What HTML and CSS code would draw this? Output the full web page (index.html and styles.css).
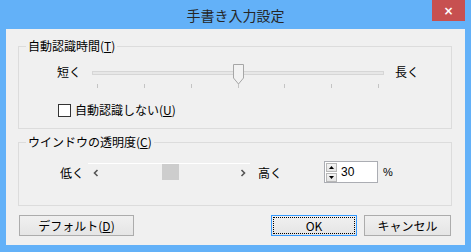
FILE: index.html
```html
<!DOCTYPE html>
<html lang="ja">
<head>
    <meta charset="UTF-8">
    <title>手書き入力設定</title>
    <link rel="stylesheet" href="styles.css">
</head>
<body>
    <div class="window">
        <div class="titlebar">
            <span class="title">手書き入力設定</span>
            <button class="close-btn">×</button>
        </div>

        <div class="client">
            <fieldset class="group group-time">
                <legend>自動認識時間(<u>T</u>)</legend>
                <div class="slider-row">
                    <span class="edge-label">短く</span>
                    <div class="slider">
                        <div class="track"></div>
                        <svg class="thumb" width="11" height="21" viewBox="0 0 11 21">
                            <polygon points="0.5,0.5 10.5,0.5 10.5,14 5.5,20 0.5,14" fill="#f2f2f2" stroke="#a6a6a6"/>
                        </svg>
                        <div class="ticks">
                            <i></i><i></i><i></i><i></i><i></i><i></i><i></i>
                        </div>
                    </div>
                    <span class="edge-label">長く</span>
                </div>
                <label class="check-row">
                    <span class="checkbox"></span>
                    <span>自動認識しない(<u>U</u>)</span>
                </label>
            </fieldset>

            <fieldset class="group group-alpha">
                <legend>ウインドウの透明度(<u>C</u>)</legend>
                <div class="alpha-row">
                    <span class="low-label">低く</span>
                    <div class="scrollbar">
                        <svg width="6" height="8" viewBox="0 0 6 8"><polyline points="4.5,1 1.5,4 4.5,7" fill="none" stroke="#555" stroke-width="1.6"/></svg>
                        <div class="scroll-track"><div class="scroll-thumb"></div></div>
                        <svg width="6" height="8" viewBox="0 0 6 8"><polyline points="1.5,1 4.5,4 1.5,7" fill="none" stroke="#555" stroke-width="1.6"/></svg>
                    </div>
                    <span class="high-label">高く</span>
                    <div class="spin">
                        <div class="spin-btns">
                            <div class="spin-btn"><svg width="5" height="3" viewBox="0 0 5 3"><polygon points="2.5,0 5,3 0,3" fill="#000"/></svg></div>
                            <div class="spin-btn"><svg width="5" height="3" viewBox="0 0 5 3"><polygon points="0,0 5,0 2.5,3" fill="#000"/></svg></div>
                        </div>
                        <span class="spin-value">30</span>
                    </div>
                    <span class="percent">%</span>
                </div>
            </fieldset>

            <div class="buttons">
                <button class="btn btn-default">デフォルト(<u>D</u>)</button>
                <div class="btn-group">
                    <button class="btn btn-ok"><span>OK</span></button>
                    <button class="btn">キャンセル</button>
                </div>
            </div>
        </div>
    </div>
</body>
</html>
```

FILE: styles.css
```css
* {
    margin: 0;
    padding: 0;
    box-sizing: border-box;
}

body {
    font-family: "Noto Sans CJK JP", "Noto Sans", sans-serif;
    font-size: 12px;
    color: #000;
    background: #63b1f8;
}

.window {
    width: 471px;
    height: 252px;
    background: #63b1f8;
    display: flex;
    flex-direction: column;
}

.titlebar {
    height: 29px;
    padding: 0 6px;
    display: grid;
    grid-template-columns: 1fr auto 1fr;
}

.title {
    grid-column: 2;
    font-size: 14px;
    line-height: 30px;
    color: #262626;
}

.close-btn {
    grid-column: 3;
    justify-self: end;
    align-self: start;
    width: 33px;
    height: 21px;
    border: none;
    background: #c75050;
    color: #fff;
    font-family: "DejaVu Sans", sans-serif;
    font-size: 12px;
    font-weight: bold;
    line-height: 20px;
}

.client {
    margin: 0 6px;
    height: 216px;
    background: #f0f0f0;
    padding: 9px 13px 0 12px;
}

.group {
    border: 1px solid #dcdcdc;
    padding: 0;
    min-width: 0;
}

.group legend {
    margin-left: 7px;
    padding: 0 2px;
    line-height: 16px;
}

.group-time {
    padding: 8px 0 10px 0;
}

.slider-row {
    display: flex;
    align-items: flex-start;
    height: 28px;
    margin-left: 38px;
}

.edge-label {
    margin-top: 2px;
    line-height: 16px;
}

.slider {
    position: relative;
    width: 292px;
    height: 28px;
    margin: 0 11px;
}

.track {
    position: absolute;
    left: 0;
    right: 0;
    top: 9px;
    height: 4px;
    background: #e7e7e7;
    border: 1px solid #d6d6d6;
}

.thumb {
    position: absolute;
    left: 141px;
    top: 2px;
}

.ticks {
    position: absolute;
    left: 5px;
    right: 5px;
    top: 22px;
    display: flex;
    justify-content: space-between;
}

.ticks i {
    width: 1px;
    height: 4px;
    background: #c4c4c4;
}

.check-row {
    display: flex;
    align-items: center;
    gap: 4px;
    margin-top: 12px;
    margin-left: 39px;
    line-height: 16px;
}

.checkbox {
    width: 13px;
    height: 13px;
    border: 1px solid #333;
    background: #fff;
}

.group-alpha {
    margin-top: 5px;
    padding: 11px 0 22px 0;
}

.alpha-row {
    display: flex;
    align-items: center;
    height: 22px;
    margin-left: 41px;
}

.scrollbar {
    display: flex;
    align-items: center;
    width: 162px;
    height: 18px;
    margin-left: 4px;
    padding: 0 4px 0 5px;
    border-top: 1px solid #fff;
}

.scroll-track {
    flex: 1;
    height: 17px;
    display: flex;
    justify-content: center;
    padding-left: 1px;
}

.scroll-thumb {
    width: 17px;
    height: 16px;
    background: #cdcdcd;
}

.high-label {
    margin-left: 8px;
}

.spin {
    display: flex;
    align-items: center;
    width: 54px;
    height: 22px;
    margin-left: 42px;
    background: #fff;
    border: 1px solid #abadb3;
    padding: 0 1px;
}

.spin-btns {
    display: flex;
    flex-direction: column;
    gap: 1px;
}

.spin-btn {
    width: 11px;
    height: 9px;
    border: 1px solid #b8b8b8;
    background: linear-gradient(#f4f4f4, #e4e4e4);
    display: flex;
    align-items: center;
    justify-content: center;
}

.spin-value {
    margin-left: 4px;
    font-family: "Liberation Sans", sans-serif;
    font-size: 12px;
}

.percent {
    margin-left: 5px;
    font-family: "Liberation Sans", sans-serif;
    font-size: 11px;
}

.buttons {
    display: flex;
    justify-content: space-between;
    margin-top: 9px;
    padding: 0 1px;
}

.btn-group {
    display: flex;
    gap: 7px;
}

.btn {
    height: 21px;
    width: 87px;
    border: 1px solid #acacac;
    background: linear-gradient(#f0f0f0, #e5e5e5);
    font-family: inherit;
    font-size: 12px;
    color: #000;
}

.btn-default {
    width: 115px;
}

.btn-ok {
    width: 86px;
    border-color: #3399ff;
    padding: 1px;
}

.btn-ok span {
    display: block;
    height: 100%;
    border: 1px dotted #000;
    line-height: 15px;
}
```
